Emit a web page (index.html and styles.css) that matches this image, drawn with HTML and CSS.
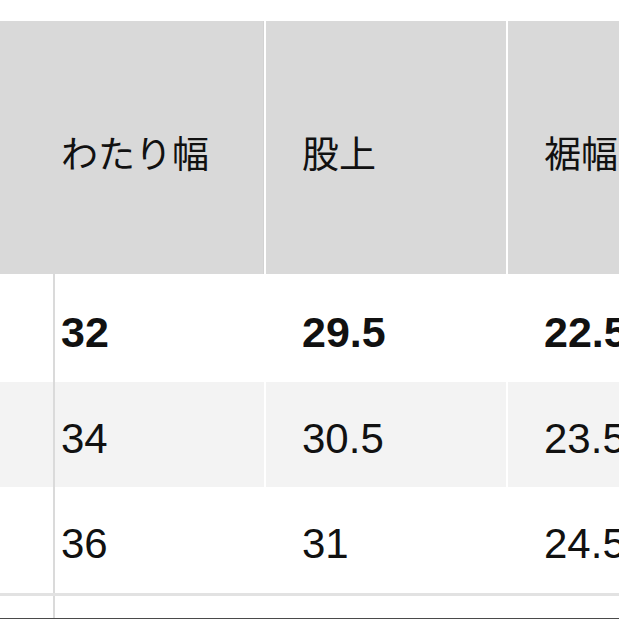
FILE: index.html
```html
<!DOCTYPE html>
<html lang="ja">
<head>
<meta charset="utf-8">
<link rel="stylesheet" href="styles.css">
</head>
<body>
<div class="page">
  <div class="table">
    <div class="row head">
      <div class="hcell first">わたり幅</div>
      <div class="hcell">股上</div>
      <div class="hcell">裾幅</div>
    </div>
    <div class="row data r1">
      <div class="stub"></div>
      <div class="cell first bold">32</div>
      <div class="cell bold">29.5</div>
      <div class="cell bold">22.5</div>
    </div>
    <div class="row data r2 alt">
      <div class="stub"></div>
      <div class="cell first">34</div>
      <div class="cell">30.5</div>
      <div class="cell">23.5</div>
    </div>
    <div class="row data r3">
      <div class="stub"></div>
      <div class="cell first">36</div>
      <div class="cell">31</div>
      <div class="cell">24.5</div>
    </div>
    <div class="row data r4">
      <div class="stub"></div>
      <div class="cell first"></div>
      <div class="cell"></div>
      <div class="cell"></div>
    </div>
  </div>
</div>
</body>
</html>
```

FILE: styles.css
```css
html, body {
  margin: 0;
  padding: 0;
  background: #ffffff;
}

.page {
  width: 619px;
  height: 619px;
  overflow: hidden;
  padding-top: 21px;
  box-sizing: border-box;
  position: relative;
}

.page::after {
  content: "";
  position: absolute;
  left: 0;
  right: 0;
  bottom: 0;
  height: 1px;
  background: #4a4a4a;
}

.table {
  width: 900px;
  color: #111111;
}

.row {
  display: grid;
  background: #ffffff;
}

.head {
  grid-template-columns: 264px 240px 240px;
  column-gap: 2px;
  height: 253px;
}

.hcell {
  background: #d9d9d9;
  display: flex;
  align-items: center;
  padding-left: 36px;
  padding-top: 10px;
  font-family: "Noto Sans CJK JP", "Noto Sans", sans-serif;
  font-size: 37px;
  line-height: 1;
  white-space: nowrap;
}

.hcell.first {
  padding-left: 61px;
  box-shadow: inset -1px 0 0 #d2d2d2;
}

.data {
  grid-template-columns: 55px 209px 242px 242px;
}

.stub {
  border-right: 2px solid #dadada;
}

.cell {
  display: flex;
  align-items: center;
  padding-left: 36px;
  padding-top: 8px;
  font-family: "Liberation Sans", Arial, sans-serif;
  font-size: 42px;
  line-height: 1;
  white-space: nowrap;
}

.data .cell + .cell {
  border-left: 2px solid #ffffff;
}

.cell.first {
  padding-left: 6px;
}

.bold {
  font-weight: 700;
  font-size: 43px;
}

.r1 { height: 108px; }
.r2 { height: 105px; }
.r3 { height: 106px; border-bottom: 3px solid #e2e2e2; }
.r4 { height: 30px; }

.alt .stub,
.alt .cell {
  background: #f3f3f3;
}
```
